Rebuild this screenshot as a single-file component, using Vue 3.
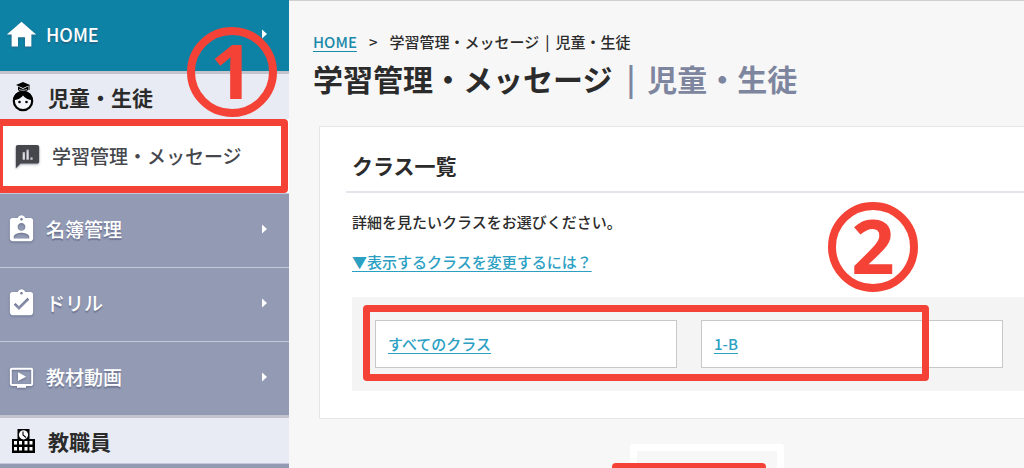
<script setup>
const studentItems = [
  { label: '名簿管理', icon: 'roster' },
  { label: 'ドリル', icon: 'drill' },
  { label: '教材動画', icon: 'video' },
]
const classes = ['すべてのクラス', '1-B']
</script>

<template>
  <div class="page">
    <nav class="sidebar">
      <a class="item home" href="#">
        <svg class="icon" viewBox="1 1 22 22"><path d="M9.500 20.500v-6.500h5v6.500h4.500v-8.500h3.400L12 3 1.600 12H5v8.500z" /></svg>
        <span class="label">HOME</span>
        <svg class="arrow" viewBox="0 0 5 10"><path d="M0 0.500 L5 5 L0 9.500Z" /></svg>
        <span class="mark mark-one">1</span>
      </a>

      <h2 class="section">
        <svg class="section-icon" viewBox="0 0 24 30">
          <circle cx="12" cy="19" r="9.200" fill="#f4f5fa" stroke="#000" stroke-width="2.200" />
          <path d="M2 18C3 11 8 9 12 9s9 2 10 9c-5 0-8-2-10-4.500C10 16 7 18 2 18z" />
          <circle cx="8.500" cy="20" r="1.300" /><circle cx="15.500" cy="20" r="1.300" />
          <path d="M12 0 19 3 12 6 5 3z" />
          <path d="M7 4.500 12 7l5-2.500V8c-2 2-8 2-10 0z" />
          <path d="M18 3v5" stroke="#000" stroke-width="1" />
          <path d="M8 7.500c2 1 6 1 8 0" fill="none" stroke="#e8ebf3" stroke-width="0.800" />
        </svg>
        <span>児童・生徒</span>
      </h2>

      <a class="item active" href="#" aria-current="page">
        <svg class="icon" viewBox="0 0 24 24"><path d="M19.500 3h-15C3.700 3 3 3.700 3 4.500V21l3.600-3.500h12.900c.8 0 1.500-.7 1.500-1.500V4.500c0-.8-.7-1.500-1.500-1.500zM10 14.500H8.200V8.500H10zm3 0h-1.800V6.500H13zm3 0h-1.800v-2H16z" /></svg>
        <span class="label">学習管理・メッセージ</span>
        <span class="frame frame-menu"></span>
      </a>

      <a v-for="item in studentItems" :key="item.label" class="item" href="#">
        <svg v-if="item.icon === 'roster'" class="icon" viewBox="0 0 24 24"><path d="M19 3h-4.180C14.400 1.840 13.300 1 12 1s-2.400.84-2.820 2H5c-1.100 0-2 .9-2 2v14c0 1.100.9 2 2 2h14c1.100 0 2-.9 2-2V5c0-1.100-.9-2-2-2zm-7 0c.55 0 1 .45 1 1s-.45 1-1 1-1-.45-1-1 .45-1 1-1zm0 4c1.660 0 3 1.340 3 3s-1.340 3-3 3-3-1.340-3-3 1.340-3 3-3zm6 12H6v-1.400c0-2 4-3.100 6-3.100s6 1.100 6 3.100V19z" /></svg>
        <svg v-else-if="item.icon === 'drill'" class="icon" viewBox="0 0 24 24"><path d="M19 3h-4.180C14.400 1.840 13.300 1 12 1s-2.400.84-2.820 2H5c-1.100 0-2 .9-2 2v14c0 1.100.9 2 2 2h14c1.100 0 2-.9 2-2V5c0-1.100-.9-2-2-2zm-7 0c.55 0 1 .45 1 1s-.45 1-1 1-1-.45-1-1 .45-1 1-1zm-2 14l-4-4 1.410-1.410L10 14.170l6.590-6.590L18 9l-8 8z" /></svg>
        <svg v-else class="icon" viewBox="0 0 24 24"><path d="M19.500 4.500h-15C3.700 4.500 3 5.200 3 6v11c0 .8.7 1.500 1.500 1.500H8.500V20h7v-1.500h4c.8 0 1.500-.7 1.500-1.500V6c0-.8-.7-1.500-1.500-1.500zm0 12.500h-15V6h15zM9.300 8v6.800l6.400-3.400z" /></svg>
        <span class="label">{{ item.label }}</span>
        <svg class="arrow" viewBox="0 0 5 10"><path d="M0 0.500 L5 5 L0 9.500Z" /></svg>
      </a>

      <h2 class="section">
        <svg class="section-icon" viewBox="0 0 24 30">
          <path d="M6.500 3h12v10H24v14H1V13h5.500z" />
          <circle cx="12.500" cy="8.800" r="4.600" fill="#fff" />
          <path d="M12 5.500v3.500l3 2.500" fill="none" stroke="#000" stroke-width="1.100" />
          <path d="M3 15h3v3.500H3zM8 15h3v3.500H8zM13.500 15h3v3.500h-3zM18.500 15h3v3.500h-3zM3 21h3v3.500H3zM8 21h3v3.500H8zM13.500 21h3v3.500h-3zM18.500 21h3v3.500h-3z" fill="#fff" />
        </svg>
        <span>教職員</span>
      </h2>
      <div class="rest"></div>
    </nav>

    <main class="main">
      <div class="crumbs">
        <a href="#">HOME</a>
        <span class="gt">&gt;</span>
        <span>学習管理・メッセージ<span class="crumb-bar">|</span>児童・生徒</span>
      </div>
      <h1 class="title">学習管理・メッセージ<span class="sub"><span class="bar">|</span>児童・生徒</span></h1>

      <section class="card">
        <h2 class="card-title">クラス一覧</h2>
        <div class="card-body">
          <p>詳細を見たいクラスをお選びください。</p>
          <p><a href="#">▼表示するクラスを変更するには？</a></p>
          <div class="panel">
            <div v-for="name in classes" :key="name" class="class-box"><a href="#">{{ name }}</a></div>
            <span class="frame frame-classes"></span>
            <span class="mark mark-two">2</span>
          </div>
        </div>
      </section>

      <div class="bottom-box"><span class="frame frame-bottom"></span></div>
    </main>
  </div>
</template>

<style>
body {
  margin: 0;
}
</style>

<style scoped>
* {
  box-sizing: border-box;
}
.page {
  display: flex;
  height: 100vh;
  overflow: hidden;
  background: #f7f7f7;
  color: #2b2b2b;
  font-family: "Noto Sans CJK JP", sans-serif;
  font-size: 15px;
  font-weight: 500;
  line-height: 24px;
}
h1,
h2,
p {
  margin: 0;
}
.sidebar {
  display: flex;
  flex-direction: column;
  flex: 0 0 289px;
}
.item {
  position: relative;
  display: flex;
  align-items: center;
  flex: none;
  gap: 9px;
  height: 74px;
  padding: 0 22px 3px 6px;
  background: #929ab4;
  border-top: 1px solid #c3c8da;
  color: #fff;
  font-size: 19px;
  text-decoration: none;
  text-shadow: 0 2px 1px rgba(60, 65, 95, 0.4);
}
.icon {
  flex: none;
  width: 31px;
  height: 31px;
  fill: currentColor;
  filter: drop-shadow(0 1px 1px rgba(60, 65, 95, 0.5));
}
.label {
  flex: 1;
}
.arrow {
  width: 5px;
  height: 10px;
  fill: #fff;
}
.home {
  height: 71px;
  background: #0e82a5;
  border-top: 0;
  font-size: 18px;
}
.active {
  height: 74px;
  padding: 0 22px 0 12px;
  background: #fff;
  border-top: 0;
  color: #45474d;
  text-shadow: none;
}
.section {
  display: flex;
  align-items: center;
  flex: none;
  gap: 13px;
  height: 48px;
  padding-left: 11px;
  background: #e8ebf3;
  border-top: 3px solid #c4c3cb;
  font-size: 21px;
  font-weight: 700;
}
.section-icon {
  width: 24px;
  height: 30px;
}
.rest {
  flex: 1 0 20px;
  background: #929ab4;
  border-top: 1px solid #c3c8da;
}
.main {
  flex: 1;
  min-width: 0;
  padding: 29px 0 0 24px;
  border-top: 1px solid #cfcfcf;
}
.crumbs {
  display: flex;
  gap: 12px;
}
.crumbs a {
  color: #1a8aaa;
}
.crumb-bar {
  margin: 0 6px;
}
a {
  text-underline-offset: 3px;
  text-decoration-skip-ink: none;
}
.title {
  margin-top: 2px;
  font-size: 30px;
  font-weight: 700;
  line-height: 44px;
}
.sub {
  color: #7d869e;
}
.bar {
  margin: 0 12px 0 14px;
}
.card {
  margin: 26px 0 0 6px;
  padding: 22px 0 27px 26px;
  background: #fff;
  border: 1px solid #e6e6e8;
  border-right: 0;
}
.card-title {
  padding: 0 0 10px 6px;
  border-bottom: 2px solid #e3e7eb;
  font-size: 21px;
  line-height: 32px;
}
.card-body {
  padding: 17px 0 0 6px;
}
.card-body p {
  margin-bottom: 16px;
}
.card-body a {
  color: #2ba0c3;
}
.panel {
  position: relative;
  display: grid;
  grid-template-columns: 1fr 1fr;
  gap: 24px;
  margin-top: 23px;
  padding: 23px 21px 23px 23px;
  background: #f4f4f4;
}
.class-box {
  padding: 11px 12px;
  background: #fff;
  border: 1px solid #c8c8c8;
}
.frame {
  position: absolute;
  border: 7px solid #f44336;
  border-radius: 4px;
  pointer-events: none;
}
.frame-menu {
  inset: 0 1px 0 -4px;
}
.frame-classes {
  inset: 8px 95px 10px 11px;
}
.mark {
  position: absolute;
  z-index: 1;
  display: flex;
  align-items: center;
  justify-content: center;
  width: 90px;
  height: 90px;
  padding-bottom: 5px;
  border: 8px solid #f44336;
  border-radius: 50%;
  color: #f44336;
  font-family: "Open Sans", sans-serif;
  font-size: 76px;
  font-weight: 700;
  line-height: 69px;
  text-shadow: none;
}
.mark-one {
  top: 27px;
  right: 12px;
}
.mark-two {
  top: -95px;
  right: 106px;
}
.bottom-box {
  position: relative;
  width: 154px;
  height: 60px;
  margin: 25px 0 0 317px;
  border: 7px solid #fff;
  border-radius: 3px;
}
.frame-bottom {
  top: 12px;
  left: -25px;
  width: 154px;
  height: 60px;
}
</style>
